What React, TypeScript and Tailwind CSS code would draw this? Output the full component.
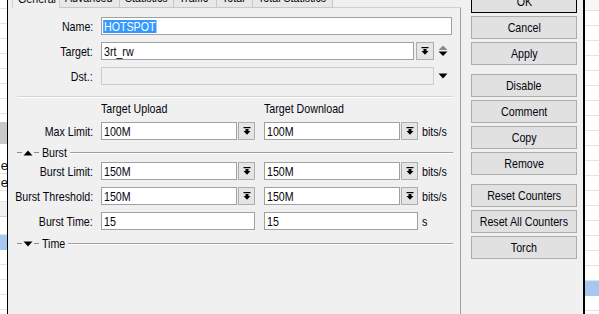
import React from "react";

const FONT = "[font-family:Liberation_Sans,Arial,sans-serif]";

function T({ children, o = "l" }: { children: React.ReactNode; o?: "l" | "r" | "c" }) {
  const origin = o === "l" ? "origin-left" : o === "r" ? "origin-right" : "origin-center";
  return <span className={`inline-block whitespace-nowrap scale-x-[0.82] shrink-0 ${origin}`}>{children}</span>;
}

function DropIcon() {
  return (
    <svg width="8" height="8" viewBox="0 0 8 8">
      <rect x="0.5" y="0" width="7" height="1.2" fill="#000" />
      <rect x="2.5" y="2" width="3" height="2" fill="#000" />
      <polygon points="0.5,4 7.5,4 4,7.8" fill="#000" />
    </svg>
  );
}

function DropBtn({ w = 17 }: { w?: number }) {
  return (
    <div
      className={`${w === 18 ? "w-[18px]" : "w-[17px]"} h-[18px] ml-[1px] bg-[#e5e5e5] border border-[#adadad] flex items-center justify-center shrink-0`}
    >
      <DropIcon />
    </div>
  );
}

function Field({ w, value, disabled }: { w: string; value?: React.ReactNode; disabled?: boolean }) {
  return (
    <div
      className={`${w} h-[18px] ${disabled ? "bg-[#f0f0f0] border-[#cccccc]" : "bg-white border-[#a0a0a0]"} border flex items-center pl-[2px] overflow-hidden whitespace-nowrap leading-[15px] shrink-0`}
    >
      {value}
    </div>
  );
}

function Row({ label, children, className = "" }: { label: string; children: React.ReactNode; className?: string }) {
  return (
    <div className={`flex items-center h-[18px] ${className}`}>
      <div className="w-[85px] flex justify-end whitespace-nowrap leading-[15px] shrink-0">
        <T o="r">{label}</T>
      </div>
      <div className="ml-[8px] flex items-center h-full">{children}</div>
    </div>
  );
}

function GroupSep({ label, up, lw, className = "" }: { label: string; up?: boolean; lw: string; className?: string }) {
  return (
    <div className={`flex items-center h-[15px] ${className}`}>
      <div className="ml-[9px] w-[5px] h-px bg-[#8c8c8c]" />
      <svg width="10" height="6" viewBox="0 0 10 6" className="ml-[1px]">
        {up ? <polygon points="0.5,5.5 9.5,5.5 5,0.5" fill="#000" /> : <polygon points="0.5,0.5 9.5,0.5 5,5.5" fill="#000" />}
      </svg>
      <div className="ml-[1px] w-[5px] h-px bg-[#8c8c8c]" />
      <div className={`ml-[3px] leading-[15px] ${lw} shrink-0`}>
        <T>{label}</T>
      </div>
      <div className="flex-1 flex flex-col">
        <div className="h-px bg-[#a0a0a0]" />
        <div className="h-px bg-white" />
      </div>
    </div>
  );
}

function Btn({ label, def, className = "" }: { label: string; def?: boolean; className?: string }) {
  return (
    <div
      className={`w-[106px] h-[23px] ${def ? "border-black" : "border-[#adadad]"} border bg-[#e1e1e1] flex items-center justify-center leading-[15px] whitespace-nowrap ${className}`}
    >
      <T o="c">{label}</T>
    </div>
  );
}

const tabs = [
  { t: "General", w: "w-[48px]", sel: true },
  { t: "Advanced", w: "w-[60px]" },
  { t: "Statistics", w: "w-[54px]" },
  { t: "Traffic", w: "w-[43px]" },
  { t: "Total", w: "w-[36px]" },
  { t: "Total Statistics", w: "w-[80px]" },
];

function LeftStrip() {
  const rows = [9, 25, 40, 55, 70, 85, 100, 115];
  return (
    <div className="w-[7px] h-full bg-white flex flex-col overflow-hidden text-[#111] shrink-0">
      {rows.map((_, i) => (
        <div key={i} className={`${i === 0 ? "h-[9px]" : "h-[15px]"} border-b border-[#e3e3e3] shrink-0`} />
      ))}
      <div className="h-[8px] shrink-0" />
      <div className="h-[22px] bg-[#c8c8c8] shrink-0" />
      <div className="h-[13px] shrink-0" />
      <div className="h-[17px] shrink-0 flex items-center justify-end leading-[15px] border-b border-[#e3e3e3]">
        <span className="-mr-[1px]">e</span>
      </div>
      <div className="h-[17px] shrink-0 flex items-center justify-end leading-[15px] border-b border-[#e3e3e3]">
        <span className="-mr-[1px]">e</span>
      </div>
      <div className="h-[11px] shrink-0 border-b border-[#e3e3e3]" />
      <div className="h-[15px] shrink-0 bg-[#f0f0f0] border-b border-[#d0d0d0]" />
      <div className="h-[18px] shrink-0 border-b border-[#e3e3e3]" />
      <div className="h-[15px] shrink-0 bg-[#a6c8f0]" />
      <div className="h-[15px] shrink-0 border-b border-[#e3e3e3]" />
      <div className="h-[15px] shrink-0 border-b border-[#e3e3e3]" />
      <div className="h-[15px] shrink-0 border-b border-[#e3e3e3]" />
      <div className="h-[15px] shrink-0 border-b border-[#e3e3e3]" />
    </div>
  );
}

function RightStrip() {
  const rows = Array.from({ length: 21 }, (_, i) => i);
  return (
    <div className="flex-1 h-full bg-white flex flex-col overflow-hidden">
      <div className="h-[11px] shrink-0 border-b border-[#e3e3e3] bg-[#f7f7f7]" />
      {rows.map((i) => (
        <div key={i} className={`h-[15px] shrink-0 ${i === 18 ? "bg-[#a6c8f0]" : "border-b border-[#e3e3e3]"}`} />
      ))}
    </div>
  );
}

function LimitRow({ label, v1, v2, className = "" }: { label: string; v1: string; v2: string; className?: string }) {
  return (
    <Row label={label} className={className}>
      <Field w="w-[136px]" value={<T>{v1}</T>} />
      <DropBtn />
      <div className="ml-[9px]">
        <Field w="w-[136px]" value={<T>{v2}</T>} />
      </div>
      <DropBtn />
      <span className="ml-[4px] leading-[15px]">
        <T>bits/s</T>
      </span>
    </Row>
  );
}

export default function App() {
  return (
    <div className={`w-[599px] h-[314px] overflow-hidden flex bg-[#f0f0f0] text-[13px] text-[#05050f] ${FONT}`}>
      <LeftStrip />
      <div className="w-px h-full bg-black shrink-0" />
      <div className="w-[575px] h-[327px] -mt-[13px] flex shrink-0">
        {/* tab area */}
        <div className="w-[453px] flex flex-col shrink-0">
          <div className="h-[21px] flex items-end pl-[4px]">
            {tabs.map((tb) => (
              <div
                key={tb.t}
                className={`${tb.w} h-[20px] ${
                  tb.sel ? "bg-[#f0f0f0] border-x border-t border-[#d0d0d0]" : "bg-[#e8e8e8] border-r border-t border-b border-[#c8c8c8]"
                } flex items-end pl-[5px] leading-[14px] whitespace-nowrap overflow-hidden pb-[2px] shrink-0`}
              >
                <T>{tb.t}</T>
              </div>
            ))}
            <div className="flex-1 h-px bg-[#d0d0d0]" />
          </div>
          <div className="flex-1 border-r border-[#a0a0a0] flex flex-col pt-[9px]">
            <Row label="Name:">
              <Field
                w="w-[351px]"
                value={
                  <T>
                    <span className="bg-[#3399ff] text-white leading-[13px] inline-block -ml-px pl-px pr-px">HOTSPOT</span>
                  </T>
                }
              />
            </Row>
            <Row label="Target:" className="mt-[7px]">
              <Field w="w-[313px]" value={<T>3rt_rw</T>} />
              <div className="ml-[1px]">
                <DropBtn w={18} />
              </div>
              <svg width="10" height="12" viewBox="0 0 10 12" className="ml-[4px]">
                <polygon points="0.5,5 9.5,5 5,0.5" fill="#8a8a8a" />
                <polygon points="0.5,6.5 9.5,6.5 5,11" fill="#000" />
              </svg>
            </Row>
            <Row label="Dst.:" className="mt-[7px]">
              <Field w="w-[333px]" disabled />
              <svg width="10" height="6" viewBox="0 0 10 6" className="ml-[4px]">
                <polygon points="0.5,0.5 9.5,0.5 5,5.5" fill="#000" />
              </svg>
            </Row>
            <div className="mt-[11px] ml-[9px] mr-[7px] flex flex-col">
              <div className="h-px bg-[#d4d4d4]" />
              <div className="h-px bg-white" />
            </div>
            <div className="mt-[3px] h-[15px] flex leading-[15px]">
              <div className="ml-[93px] w-[163px]">
                <T>Target Upload</T>
              </div>
              <div>
                <T>Target Download</T>
              </div>
            </div>
            <LimitRow label="Max Limit:" v1="100M" v2="100M" className="mt-[6px]" />
            <GroupSep label="Burst" up lw="w-[28px]" className="mt-[5px] mr-[7px]" />
            <LimitRow label="Burst Limit:" v1="150M" v2="150M" className="mt-[2px]" />
            <LimitRow label="Burst Threshold:" v1="150M" v2="150M" className="mt-[7px]" />
            <Row label="Burst Time:" className="mt-[7px]">
              <Field w="w-[154px]" value={<T>15</T>} />
              <div className="ml-[9px]">
                <Field w="w-[154px]" value={<T>15</T>} />
              </div>
              <span className="ml-[4px] leading-[15px]">
                <T>s</T>
              </span>
            </Row>
            <GroupSep label="Time" lw="w-[26px]" className="mt-[6px] mr-[7px]" />
          </div>
        </div>
        {/* buttons */}
        <div className="ml-[10px] pt-[3px] flex flex-col">
          <Btn label="OK" def />
          <Btn label="Cancel" className="mt-[3px]" />
          <Btn label="Apply" className="mt-[3px]" />
          <Btn label="Disable" className="mt-[9px]" />
          <Btn label="Comment" className="mt-[3px]" />
          <Btn label="Copy" className="mt-[3px]" />
          <Btn label="Remove" className="mt-[3px]" />
          <Btn label="Reset Counters" className="mt-[9px]" />
          <Btn label="Reset All Counters" className="mt-[3px]" />
          <Btn label="Torch" className="mt-[3px]" />
        </div>
      </div>
      <div className="w-[2px] h-full bg-black shrink-0" />
      <RightStrip />
    </div>
  );
}
